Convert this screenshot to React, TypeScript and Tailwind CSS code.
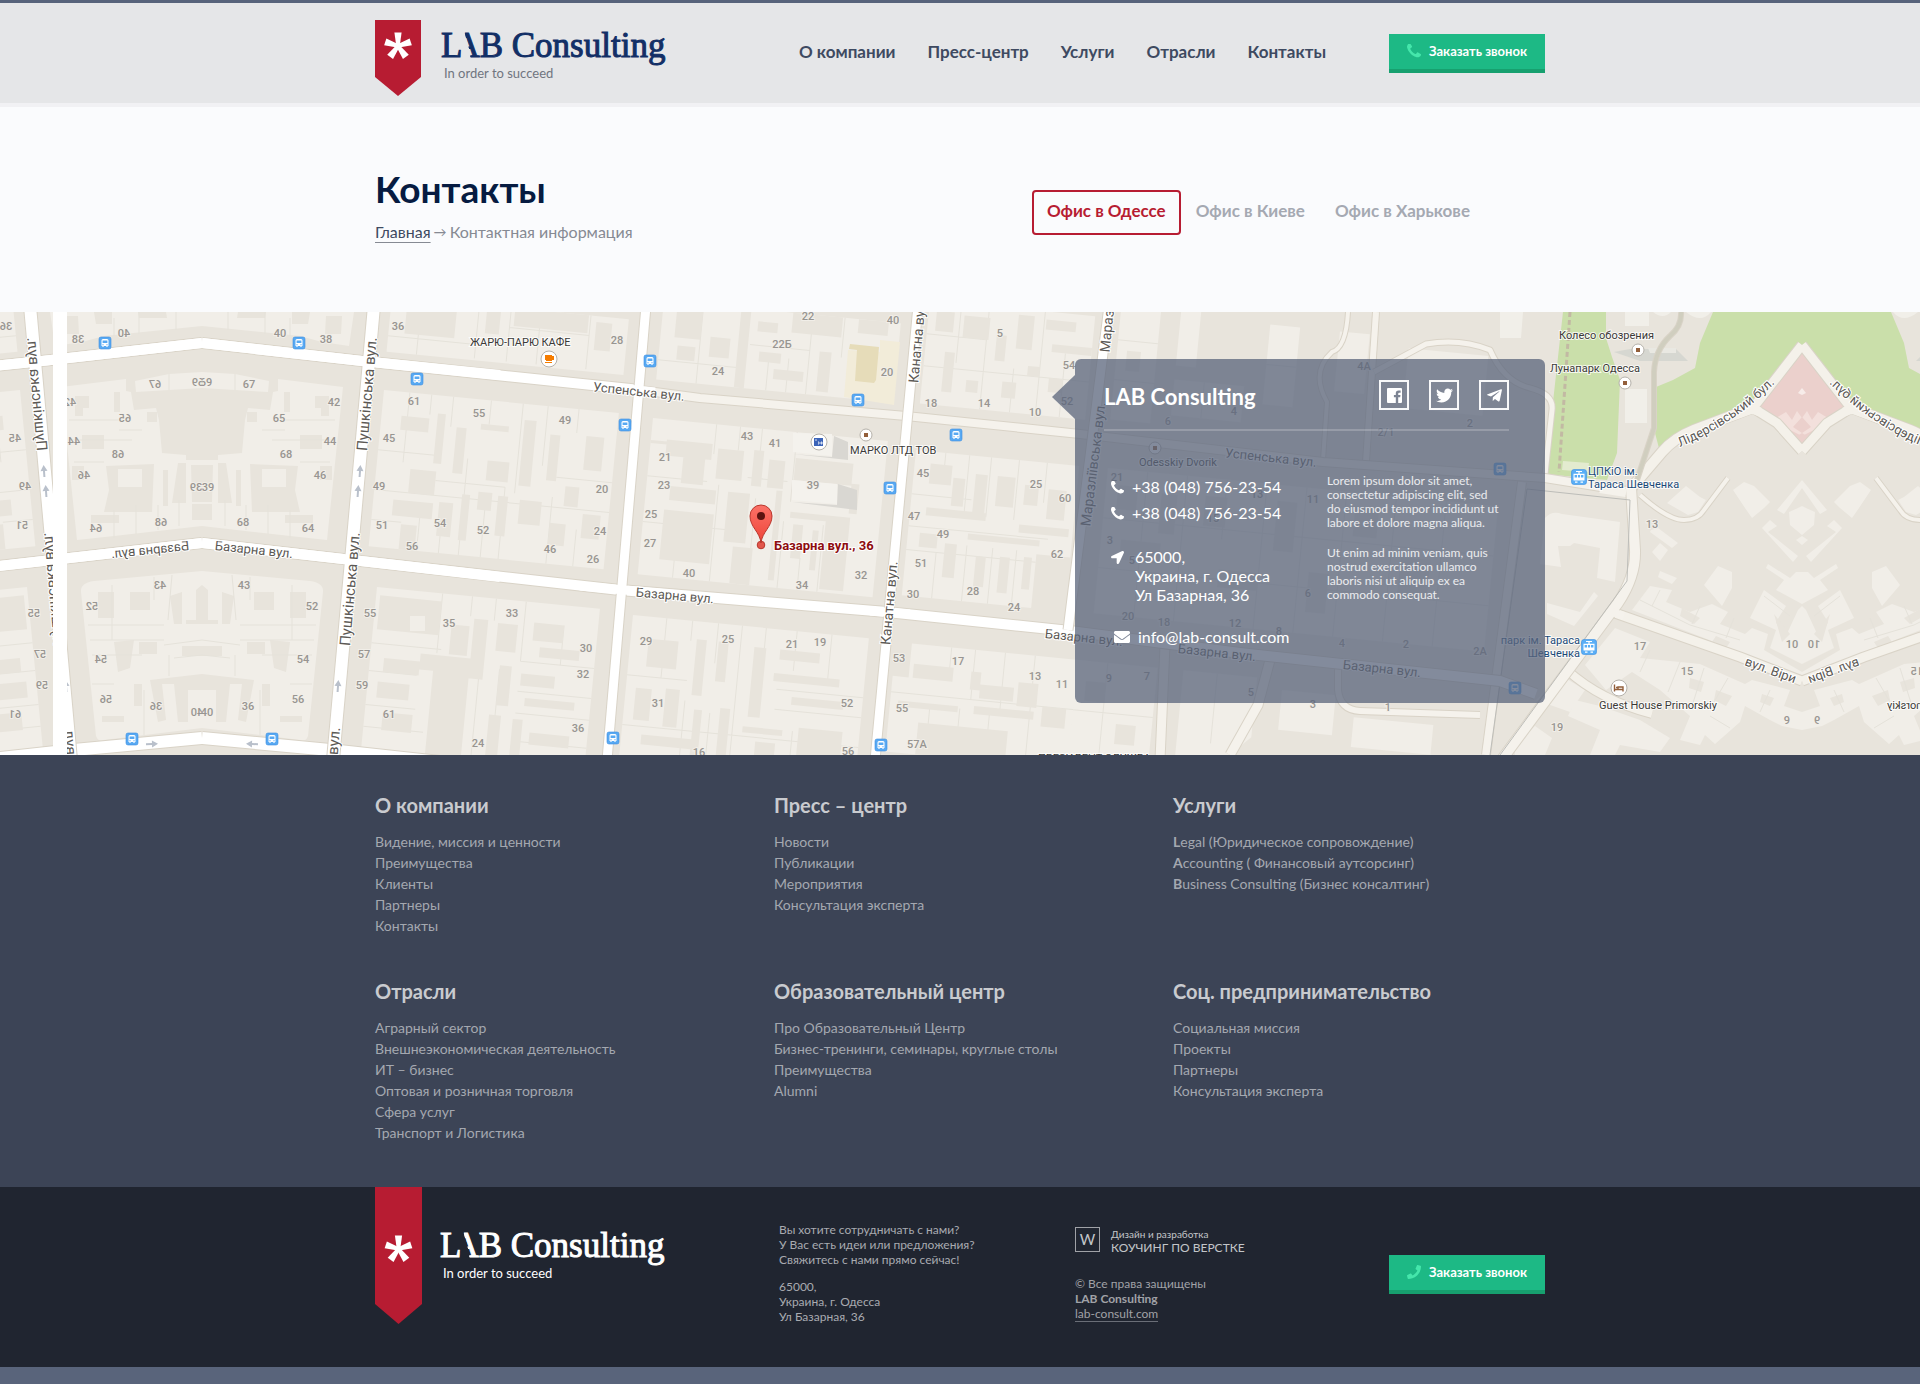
import type { ReactNode } from 'react';
import { FaEnvelope, FaLocationArrow, FaPhone, FaTelegramPlane, FaTwitter } from 'react-icons/fa';

const NAV = ['О компании', 'Пресс-центр', 'Услуги', 'Отрасли', 'Контакты'];
const OFFICES = ['Офис в Одессе', 'Офис в Киеве', 'Офис в Харькове'];

const FOOTER_MENU = [
	{ title: 'О компании', links: ['Видение, миссия и ценности', 'Преимущества', 'Клиенты', 'Партнеры', 'Контакты'] },
	{ title: 'Пресс – центр', links: ['Новости', 'Публикации', 'Мероприятия', 'Консультация эксперта'] },
	{
		title: 'Услуги',
		boldFirst: true,
		links: ['Legal (Юридическое сопровождение)', 'Accounting ( Финансовый аутсорсинг)', 'Business Consulting (Бизнес консалтинг)'],
	},
	{
		title: 'Отрасли',
		links: ['Аграрный сектор', 'Внешнеэкономическая деятельность', 'ИТ – бизнес', 'Оптовая и розничная торговля', 'Сфера услуг', 'Транспорт и Логистика'],
	},
	{ title: 'Образовательный центр', links: ['Про Образовательный Центр', 'Бизнес-тренинги, семинары, круглые столы', 'Преимущества', 'Alumni'] },
	{ title: 'Соц. предпринимательство', links: ['Социальная миссия', 'Проекты', 'Партнеры', 'Консультация эксперта'] },
];

function Star({ x, y }: { x: number; y: number }) {
	return (
		<g transform={`translate(${x} ${y})`} fill="#fff">
			{[0, 72, 144, 216, 288].map((a) => (
				<path key={a} d="M-1.6 1 L-3.6 -13.4 H3.6 L1.6 1 Z" transform={`rotate(${a})`} />
			))}
		</g>
	);
}

function Handset({ size }: { size: number }) {
	return (
		<svg width={size} height={size} viewBox="192 192 1408 1408" fill="currentColor" aria-hidden="true">
			<path d="M1600 1240q0 27-10 70.5t-21 68.5q-21 50-122 106-94 51-186 51-27 0-52.5-3.5t-57-12.5-47-14.5-55.5-20.5-49-18q-98-35-175-83-128-79-264.5-215.5t-215.5-264.5q-48-77-83-175-3-9-18-49t-20.5-55.5-14.5-47-12.5-57-3.5-52.5q0-92 51-186 56-101 106-122 25-11 68.5-21t70.5-10q14 0 21 3 18 6 53 76 11 19 30 54t35 63.5 31 53.5q3 4 17.5 25t21.5 35.5 7 28.5q0 20-28.5 50t-62 55-62 53-28.5 46q0 9 5 22.5t8.5 20.5 14 24 11.5 19q76 137 174 235t235 174q2 1 19 11.5t24 14 20.5 8.5 22.5 5q18 0 46-28.5t53-62 55-62 50-28.5q14 0 28.5 7t35.5 21.5 25 17.5q25 15 53.5 31t63.5 35 54 30q70 35 76 53 3 7 3 21z" />
		</svg>
	);
}

function FacebookIcon() {
	return (
		<svg width="15" height="15" viewBox="0 0 15 15" fill="currentColor" aria-hidden="true">
			<path d="M1 0 H14 Q15 0 15 1 V14 Q15 15 14 15 H11.2 V9.2 H13.2 L13.5 7 H11.2 V5.700 Q11.2 4.700 12.2 4.700 H13.6 V2.600 H11.6 Q8.800 2.600 8.800 5.400 V7 H6.900 V9.200 H8.800 V15 H1 Q0 15 0 14 V1 Q0 0 1 0 Z" />
		</svg>
	);
}

function LogoText({ className, tagline }: { className: string; tagline: string }) {
	return (
		<span className="flex flex-col">
			<span className={`font-['Liberation_Serif',serif] text-[35px] leading-[38px] whitespace-nowrap [-webkit-text-stroke:1px] ${className}`}>
				L<span className="-ml-2 inline-block [clip-path:polygon(34%_0,56%_0,104%_74%,104%_100%,68%_100%,60%_62%)]">A</span>B Consulting
			</span>
			<span className={`pl-[3px] text-[13px] leading-4 ${tagline}`}>In order to succeed</span>
		</span>
	);
}

function CallButton({ icon }: { icon: ReactNode }) {
	return (
		<button type="button" className="flex w-[156px] shrink-0 items-center justify-center gap-2 border-b-4 border-[#17a06f] bg-[#1db985] pt-[8px] pb-[9px] text-[13px] leading-[18px] font-bold whitespace-nowrap text-white">
			<span className="text-[#45e6ab]">{icon}</span>
			Заказать звонок
		</button>
	);
}

/* ---------- map ---------- */

type BlockProps = { x: number; y: number; base: string; yards?: string; lots?: string };

function Block({ x, y, base, yards, lots }: BlockProps) {
	return (
		<g transform={`translate(${x} ${y}) rotate(5.6)`}>
			<path d={base} fill="#f1eee8" />
			{lots && <path d={lots} fill="none" stroke="#e5e2da" />}
			{yards && <path d={yards} fill="#e8e4dc" />}
		</g>
	);
}

function Road({ d, w, color = '#fff' }: { d: string; w: number; color?: string }) {
	return (
		<g fill="none" strokeLinejoin="round">
			<path d={d} stroke="#d9d3c7" strokeWidth={w + 2} />
			<path d={d} stroke={color} strokeWidth={w} />
		</g>
	);
}

function Numbers({ items }: { items: [string, number, number][] }) {
	return (
		<g fontSize="11" fontWeight="500" fill="#989591" textAnchor="middle" stroke="#f1eee8" strokeWidth="2" paintOrder="stroke">
			{items.map(([n, x, y]) => (
				<text key={`${n}-${x}-${y}`} x={x} y={y + 4}>
					{n}
				</text>
			))}
		</g>
	);
}

function Street({ x, y, a, size = 13, children }: { x: number; y: number; a: number; size?: number; children: string }) {
	return (
		<text transform={`translate(${x} ${y}) rotate(${a})`} y="5" textAnchor="middle" fontSize={size} fill="#5c5955" stroke="#fff" strokeWidth="2" paintOrder="stroke">
			{children}
		</text>
	);
}

function Place({ x, y, color = '#3c3a38', anchor = 'start', children }: { x: number; y: number; color?: string; anchor?: 'start' | 'end'; children: string }) {
	return (
		<text x={x} y={y} fontSize="11" fill={color} textAnchor={anchor} stroke="#fff" strokeWidth="2" strokeOpacity=".8" paintOrder="stroke">
			{children}
		</text>
	);
}

function Bus({ x, y }: { x: number; y: number }) {
	return (
		<g transform={`translate(${x} ${y})`}>
			<rect x="-6" y="-6" width="12" height="12" rx="2" fill="#58a9f2" stroke="#3d8fe0" strokeWidth=".6" />
			<path d="M-3.5 3 V-2.5 Q-3.5 -4 -2 -4 H2 Q3.5 -4 3.5 -2.5 V3 H2.6 V4 H1.4 V3 H-1.4 V4 H-2.6 V3 Z" fill="#fff" />
			<path d="M-2.4 -2.6 H2.4 V0 H-2.4 Z M-2.6 1.2 h1.2 v1 h-1.2 Z M1.4 1.2 h1.2 v1 h-1.2 Z" fill="#58a9f2" />
		</g>
	);
}

function Tram({ x, y }: { x: number; y: number }) {
	return (
		<g transform={`translate(${x} ${y})`}>
			<rect x="-7.5" y="-7.5" width="15" height="15" rx="2.5" fill="#5aaef6" stroke="#3d8fe0" strokeWidth=".6" />
			<path d="M-3 -5.5 H3 M0 -5.5 V-3" stroke="#fff" strokeWidth="1.2" />
			<path d="M-5.5 -3.3 H5.5 V3.5 H-5.5 Z M-4 4.4 H-1.5 V5.8 H-4 Z M1.5 4.4 H4 V5.8 H1.5 Z" fill="#fff" />
			<path d="M-4.4 -2 h2.4 v2.4 h-2.4 Z M-1.1 -2 h2.2 v2.4 h-2.2 Z M2 -2 h2.4 v2.4 h-2.4 Z" fill="#5aaef6" />
		</g>
	);
}

function Poi({ x, y, r = 6, children }: { x: number; y: number; r?: number; children?: ReactNode }) {
	return (
		<g transform={`translate(${x} ${y})`}>
			<circle r={r} fill="#fff" stroke="#b5b1aa" />
			{children ?? <rect x="-2" y="-2" width="4" height="4" fill="#935f3b" />}
		</g>
	);
}

function OneWay({ x, y, a = 0 }: { x: number; y: number; a?: number }) {
	return <path d="M-1 6 V0 H-3.5 L0 -6 L3.5 0 H1 V6 Z" transform={`translate(${x} ${y}) rotate(${a})`} fill="#b9c0cb" />;
}

const WEST_NUMBERS: [string, number, number][] = [
	['40', 280, 333], ['38', 326, 339], ['36', 398, 326], ['28', 617, 340], ['67', 249, 384], ['69', 206, 382], ['42', 334, 402], ['65', 279, 418],
	['44', 330, 441], ['68', 286, 454], ['46', 320, 475], ['39', 208, 487], ['68', 243, 522], ['64', 308, 528], ['61', 414, 401], ['55', 479, 413],
	['49', 565, 420], ['45', 389, 438], ['49', 379, 486], ['20', 602, 489], ['51', 382, 525], ['54', 440, 523], ['52', 483, 530], ['24', 600, 531],
	['56', 412, 546], ['46', 550, 549], ['26', 593, 559], ['43', 244, 585], ['52', 312, 606], ['54', 303, 659], ['56', 298, 699], ['36', 248, 706],
	['40', 207, 712], ['55', 370, 613], ['35', 449, 623], ['33', 512, 613], ['57', 364, 654], ['30', 586, 648], ['32', 583, 674], ['59', 362, 685],
	['61', 389, 714], ['36', 578, 728], ['24', 478, 743],
];

/* quarters around Pushkinska street, drawn twice: as is and mirrored */
function WestQuarter({ mirrored = false }: { mirrored?: boolean }) {
	return (
		<g>
			<path d="M202 312 H354 L349 346 L322 342 L300 336 L202 326 Z M202 372 L235 374 L269 381 L268 392 L202 388 Z M278 379 L343 387 L327 540 L290 536 L202 526 V502 H212 L213 465 H202 V460 H218 V455 L242 453 L245 420 L248 408 L270 410 L273 392 L278 391 Z" fill="#f1eee8" />
			<path d="M202 571 L310 581 Q324 583 323 592 L308 736 Q306 742 300 740 L202 728 Z" fill="#f1eee8" />
			<path
				d="M238 312 h28 l-1 6 h-28 Z M292 312 h18 l-2 12 h-16 Z M326 316 h16 l-1 18 h-16 Z M284 392 h6 v20 h-6 Z M315 396 h14 v20 h-8 v-8 h-6 Z M300 435 h22 v14 h-22 Z M247 412 h10 v10 h-10 Z M320 466 h12 v14 h-12 Z M218 463 L226 463 L232 503 H218 Z M236 470 h5 v36 h-5 Z M250 464 L298 466 L295 490 L300 512 H252 Z M285 515 h28 v8 h-28 Z M202 504 h10 v16 h-10 Z"
				fill="#e8e4dc"
			/>
			<path
				d="M202 585 L208 590 V620 H218 V624 H202 Z M222 592 L234 596 L230 624 H222 Z M254 592 h20 v18 h-20 Z M290 592 h16 v26 h-16 Z M247 642 h18 v12 h-18 Z M270 640 L290 642 L286 672 L274 668 Z M202 646 h20 v10 h-20 Z M202 674 L254 680 L246 722 L238 720 L242 684 L230 684 L226 722 H216 V690 H202 Z M262 684 h8 v22 h-8 Z M280 716 h22 v6 h-22 Z"
				fill="#e8e4dc"
			/>
			<rect x="262" y="469" width="24" height="18" fill="#f1eee8" />
			<path
				d="M228 312 V330 M265 312 V334 M290 318 V336 M235 374 V390 M278 420 H335 M272 440 H332 M262 430 H285 M300 462 H330 M225 500 V526 M246 505 V530 M268 505 V534 M290 510 V538 M292 585 V640 M250 577 V600 M232 575 L236 620 M240 625 H316 M240 640 H314 M262 655 H312 M202 640 L240 645 M235 655 V676 M202 655 L230 658 M260 690 V735 M290 684 H312"
				fill="none"
				stroke="#e5e2da"
			/>
			{/* right side of the street */}
			<Block
				x={384}
				y={390}
				base="M0 0 H236 V157 H0 Z"
				lots="M26 0 V70 M48 0 V20 M70 0 V30 M108 0 V24 M140 0 V90 M165 0 V60 M196 0 V24 M0 60 H60 M0 100 H236 M60 85 H130 M180 70 H236 M90 60 V157 M130 85 V157 M48 120 V157 M178 90 V157 M205 120 V157 M0 130 H30 M112 100 V157 M70 110 V157"
				yards="M20 24 h28 v14 h-28 Z M56 18 h8 v50 h-8 Z M76 30 h10 v46 h-10 Z M100 24 h28 v6 h-28 Z M110 60 h22 v20 h-22 Z M143 16 h12 v66 h-12 Z M170 28 h10 v46 h-10 Z M206 26 h18 v34 h-18 Z M34 76 h26 v24 h-26 Z M20 108 h40 v16 h-40 Z M88 96 h8 v46 h-8 Z M104 92 h14 v18 h-14 Z M124 94 h10 v40 h-10 Z M146 96 h22 v24 h-22 Z M190 78 h14 v20 h-14 Z M178 116 h16 v22 h-16 Z M210 104 h18 v24 h-18 Z M66 106 h14 v34 h-14 Z M30 132 h16 v25 h-16 Z"
			/>
			<Block
				x={377}
				y={587}
				base="M0 0 H224 V180 H0 Z"
				lots="M66 0 V60 M96 0 V20 M120 0 V22 M150 0 V60 M0 56 H70 M0 84 H48 M0 118 H50 M0 140 H60 M110 78 V180 M130 70 V180 M150 60 H224 M150 90 H224 M150 112 H224 M150 140 H224 M190 20 V60"
				yards="M4 8 h62 v34 h-62 Z M78 30 h18 v30 h-18 Z M100 22 h14 v60 h-14 Z M124 24 h20 v28 h-20 Z M160 20 h30 v18 h-30 Z M168 44 h40 v10 h-40 Z M50 62 L100 62 V180 H64 V78 H50 Z M14 70 h36 v14 h-36 Z M10 94 h32 v16 h-32 Z M18 124 h30 v18 h-30 Z M130 66 h12 v40 h-12 Z M152 72 h34 v12 h-34 Z M158 96 h50 v8 h-50 Z M124 116 h12 v54 h-12 Z M148 118 h10 v50 h-10 Z M166 130 h40 v12 h-40 Z M168 152 h36 v10 h-36 Z"
			/>
			<rect x="410" y="616" width="15" height="15" fill="#f1eee8" />
			<Block
				x={392}
				y={296}
				base="M0 0 H238 V56 H0 Z"
				lots="M30 0 V56 M88 0 V54 M120 0 V54 M150 0 V54 M200 0 V54 M0 40 H88 M120 20 H200"
				yards="M16 0 H66 V36 H16 Z M96 0 h14 v28 h-14 Z M124 0 h74 v18 h-74 Z M206 6 h16 v28 h-16 Z"
			/>
			<Road d="M202 738 L330 750 L440 762" w={12} />
			<Road d="M202 343 L362 361 L640 390" w={10} />
			<Road d="M202 543 L352 560 L620 590" w={10} />
			<Road d="M374 306 L333 760" w={12} />
			<path d="M202 343 L362 361 L500 375 M202 543 L352 560 L500 577" fill="none" stroke="#fff" strokeWidth="10" />
			<Numbers items={mirrored ? WEST_NUMBERS.filter(([, x]) => x < 400) : WEST_NUMBERS} />
			<Street x={254} y={549} a={6}>Базарна вул.</Street>
			<Street x={367} y={394} a={-85} size={15}>Пушкінська вул.</Street>
			<Street x={350} y={589} a={-85} size={15}>Пушкінська вул.</Street>
			<Street x={334} y={741} a={-85} size={15}>вул.</Street>
			<OneWay x={360} y={471} a={4} />
			<OneWay x={358} y={491} a={4} />
			<OneWay x={338} y={686} a={4} />
			<OneWay x={252} y={744} a={-88} />
			<Bus x={299} y={343} />
			<Bus x={272} y={739} />
		</g>
	);
}

/* seaside part of the park, drawn twice as well */
function EastQuarter({ mirrored = false }: { mirrored?: boolean }) {
	return (
		<g>
			<path d="M1713 312 L1700 343 L1695 368 L1673 380 L1656 387 L1655 433 L1660 452 L1690 430 L1750 408 L1802 408 V312 Z" fill="#cadfaa" />
			<path d="M1625 312 H1649 V326 H1625 Z M1653 312 h18 q-8 8 -18 0 Z M1686 312 h25 q-10 12 -25 0 Z M1625 389 H1647 V423 H1625 Z" fill="#f1efe9" />
			<path d="M1614 352 L1630 349 L1676 349 L1688 361 L1640 361 Z" fill="#cfd1cc" opacity=".7" />
			<path d="M1648 348 H1676 V353 H1650 Z" fill="#e9e8e2" />
			<path
				d="M1667 503 L1686 486 L1700 497 L1706 500 L1698 512 L1688 515 Z M1733 490 L1744 482 L1754 486 L1770 502 L1764 508 L1752 518 L1745 508 Z M1777 510 L1802 480 V488 L1784 514 Z M1789 512 L1798 508 L1802 506 V535 L1790 525 Z M1796 540 L1802 536 V545 Z M1762 528 L1770 520 L1777 526 L1768 532 L1798 556 L1793 562 Z M1768 564 L1790 578 L1796 572 L1802 572 V604 L1776 590 L1784 580 L1766 568 Z M1704 585 L1718 566 L1732 572 L1732 588 L1722 606 Z M1651 530 L1658 528 L1678 543 L1672 548 L1650 532 Z M1652 552 L1660 543 L1668 550 L1660 561 Z M1660 571 L1677 578 L1672 584 L1658 577 Z"
				fill="#f1eee8"
			/>
			<path
				d="M1632 610 L1650 586 L1672 590 L1666 602 L1690 612 L1712 604 L1728 612 L1720 624 L1745 634 L1752 628 L1768 634 L1764 650 L1802 672 L1802 664 L1770 648 L1776 630 L1750 618 L1764 590 L1786 606 L1776 622 L1784 640 L1798 610 L1802 606 V680 L1740 652 Z"
				fill="#f1eee8"
			/>
			<path
				d="M1585 665 L1615 628 L1650 642 L1640 658 L1700 664 L1745 684 L1752 680 L1790 690 L1784 706 L1802 712 V730 L1782 726 L1770 720 L1745 706 L1740 722 L1715 744 L1705 735 L1700 745 L1680 740 L1690 716 L1660 690 L1632 672 L1606 690 Z"
				fill="#f1eee8"
			/>
			<path d="M1682 608 L1700 618 L1694 624 L1680 616 Z M1774 614 L1790 634 L1782 642 Z M1716 636 l14 6 -4 6 -14 -6 Z M1690 678 l14 4 -3 10 -12 -4 Z M1716 690 l16 6 -6 10 -12 -6 Z M1762 694 l12 4 -4 8 -10 -4 Z" fill="#e8e4dc" />
			<path d="M1640 600 L1690 625 L1740 640 M1660 590 L1652 606 M1700 606 L1692 624 M1734 618 L1726 638 M1764 596 L1790 616 M1650 650 L1640 672 M1680 662 L1668 692 M1704 668 L1692 706 M1728 678 L1714 702 M1770 690 L1760 712 M1710 716 L1730 728" fill="none" stroke="#e5e2da" />
			<Road d="M1640 495 Q1668 520 1684 520 Q1698 520 1704 510 L1728 478" w={4} color="#f5f2ec" />
			<Road d="M1627 493 L1662 452 Q1674 438 1694 430 L1752 408" w={10} color="#f4f1ea" />
			<Road d="M1612 612 L1740 657 L1802 681" w={9} color="#f4f1ea" />
			<Road d="M1567 670 Q1600 700 1652 714" w={8} color="#f4f1ea" />
			<path d="M1802 353 L1757 410 L1779 426 L1802 447 Z" fill="#ebd0cc" />
			<path d="M1776 418 L1786 412 L1792 420 L1797 411 L1802 418 V436 L1786 428 Z" fill="#f3e0dc" />
			<path d="M1802 417 L1793 427 L1802 433 Z M1802 433 L1794 438 L1802 445 Z" fill="#ebd0cc" />
			<path d="M1802 388 l-4 5 4 2 Z" fill="#f7ece9" />
			<Road d="M1802 345 L1753 408 L1777 423 L1802 451" w={9} color="#f4f1ea" />
			<path d="M1690 432 L1752 409 L1760 412" fill="none" stroke="#f4f1ea" strokeWidth="9" />
			<Numbers items={mirrored ? [['15', 1687, 671], ['10', 1790, 644], ['9', 1787, 720]] : [['13', 1652, 524], ['17', 1640, 646], ['15', 1687, 671], ['10', 1792, 644], ['9', 1787, 720]]} />
			<path id="liders" d="M1680 447 Q1735 424 1778 380" fill="none" />
			<text fontSize="13" fill="#5c5955" stroke="#fff" strokeWidth="2" paintOrder="stroke">
				<textPath href="#liders">Лідерсівський бул.</textPath>
			</text>
			<text transform="translate(1744 665) rotate(20)" fontSize="13" fill="#5c5955" stroke="#fff" strokeWidth="2" paintOrder="stroke">
				вул. Віри
			</text>
			<Place x={1599} y={709}>Guest House Primorskiy</Place>
		</g>
	);
}

function CityMap() {
	return (
		<svg className="absolute inset-0 h-full w-full font-[Roboto,sans-serif]" viewBox="0 312 1920 443" preserveAspectRatio="xMidYMid slice" role="img" aria-label="Карта: Базарна вул., 36">
			<defs>
				<clipPath id="west">
					<rect x="202" y="312" width="440" height="443" />
				</clipPath>
				<clipPath id="east">
					<rect x="1560" y="312" width="242" height="443" />
				</clipPath>
				<linearGradient id="pin" x1="0" y1="0" x2="0" y2="1">
					<stop offset="0" stopColor="#fb7268" />
					<stop offset="1" stopColor="#ee4438" />
				</linearGradient>
			</defs>
			<rect x="0" y="312" width="1920" height="443" fill="#e8e4dc" />

			<Block
				x={664}
				y={300}
				base="M0 0 H238 V80 H0 Z"
				lots="M40 0 V80 M84 0 V80 M150 0 V80 M182 0 V40 M90 36 H150 M0 60 H84 M110 46 V80 M130 46 V80 M200 30 V80"
				yards="M14 6 h26 v30 h-26 Z M18 44 h18 v14 h-18 Z M50 32 h20 v20 h-20 Z M78 0 h10 v80 h-10 Z M96 12 h20 v10 h-20 Z M100 42 h22 v10 h-22 Z M130 0 h50 v20 h-50 Z M116 58 h30 v10 h-30 Z M160 36 h12 v40 h-12 Z M196 0 h30 v14 h-30 Z"
			/>
			<path d="M880 340 L900 342 L894 405 L844 397 L848 350 L880 352 Z" fill="#f2ecd9" />
			<path d="M850 344 L879 347 L876 380 L874 383 L855 381 L857 350 L849 349 Z" fill="#e6dcb9" />
			<Block
				x={653}
				y={418}
				base="M0 0 H236 V157 H0 Z"
				lots="M64 0 V30 M88 0 V24 M110 0 V24 M145 0 V70 M0 58 H60 M0 104 H100 M35 130 V157 M72 60 V157 M110 70 V157 M140 90 V157 M180 90 V157 M100 50 H140 M160 125 V157"
				yards="M16 20 h46 v16 h-46 Z M34 30 h22 v32 h-22 Z M68 24 h26 v30 h-26 Z M104 22 h10 v36 h-10 Z M120 30 h16 v28 h-16 Z M146 26 h58 v22 h-58 Z M0 22 H30 V25 H0 Z M24 66 h46 v14 h-46 Z M20 90 h50 v50 h-50 Z M82 66 h22 v50 h-22 Z M92 120 h20 v37 h-20 Z M130 60 h6 v90 h-6 Z M146 80 h60 v6 h-60 Z M150 92 h10 v34 h-10 Z M182 84 h24 v70 h-24 Z M170 96 h6 v40 h-6 Z M204 46 h8 v30 h-8 Z"
			/>
			<path d="M793 433 L832 434 V456 L793 452 Z M792 480 L837 484 V504 L792 500 Z" fill="#f4f2ed" />
			<path d="M834 436 L848 442 V460 L793 454 L832 457 Z M838 484 L857 490 V510 L792 502 L837 505 Z" fill="#d9d7d2" />
			<Block
				x={633}
				y={615}
				base="M0 0 H237 V160 H0 Z"
				lots="M34 0 V60 M60 0 V20 M86 0 V40 M110 0 V160 M134 0 V20 M165 0 V40 M200 0 V50 M0 60 H60 M0 110 H237 M60 80 V160 M86 90 V160 M150 60 H237 M150 80 H237 M170 100 V160"
				yards="M18 22 h30 v28 h-30 Z M66 18 h10 v56 h-10 Z M88 18 h10 v40 h-10 Z M124 20 h12 v70 h-12 Z M150 20 h40 v10 h-40 Z M146 44 h66 v8 h-66 Z M166 66 h52 v8 h-52 Z M10 72 h16 v32 h-16 Z M40 70 h14 v38 h-14 Z M70 88 h8 v52 h-8 Z M96 84 h10 v50 h-10 Z M120 100 h40 v6 h-40 Z M134 114 h20 v30 h-20 Z M176 96 h44 v30 h-44 Z M20 118 h50 v10 h-50 Z M94 138 h26 v22 h-26 Z M180 134 h40 v14 h-40 Z"
			/>
			<Block
				x={930}
				y={300}
				base="M0 0 H166 V104 H0 Z"
				lots="M32 0 V60 M60 0 V104 M90 60 V104 M116 0 V104 M140 40 V104 M0 66 H166 M0 34 H60"
				yards="M8 10 h18 v20 h-18 Z M36 12 h26 v22 h-26 Z M70 28 h10 v26 h-10 Z M90 6 h16 v34 h-16 Z M118 8 h30 v10 h-30 Z M126 32 h40 v8 h-40 Z M20 50 h10 v40 h-10 Z M44 76 h12 v12 h-12 Z M80 74 h14 v16 h-14 Z M104 56 h12 v10 h-12 Z M126 66 h14 v14 h-14 Z"
			/>
			<Block
				x={916}
				y={450}
				base="M0 0 H164 V92 H130 V146 H0 Z"
				lots="M30 0 V30 M54 0 V60 M76 0 V60 M104 0 V60 M132 0 V40 M0 44 H60 M0 76 H140 M0 100 H130 M30 100 V146 M60 90 V146 M86 90 V146 M110 90 V146"
				yards="M16 12 h22 v20 h-22 Z M40 24 h12 v28 h-12 Z M62 18 h12 v40 h-12 Z M84 18 h18 v30 h-18 Z M112 24 h14 v20 h-14 Z M136 26 h18 v30 h-18 Z M16 56 h60 v8 h-60 Z M12 82 h18 v14 h-18 Z M60 78 h72 v6 h-72 Z M38 90 h12 v34 h-12 Z M70 100 h10 v30 h-10 Z M94 98 h10 v36 h-10 Z M118 96 h8 v32 h-8 Z M110 64 h50 v8 h-50 Z"
			/>
			<Block
				x={896}
				y={642}
				base="M16 0 H196 V110 H0 V34 H16 Z"
				lots="M56 0 V30 M80 0 V50 M110 0 V60 M140 0 V110 M0 50 H190 M40 60 V110 M70 60 V110 M100 60 V110"
				yards="M20 20 h40 v14 h-40 Z M78 22 h10 v18 h-10 Z M88 34 h34 v14 h-34 Z M126 28 h20 v24 h-20 Z M8 58 h60 v6 h-60 Z M84 56 h60 v8 h-60 Z M30 78 h90 v32 h-90 Z M152 50 h24 v20 h-24 Z"
			/>
			{/* blocks under the contact card */}
			<Block
				x={1122}
				y={300}
				base="M0 0 H40 V120 H0 Z M60 0 H80 V60 H60 Z M60 74 H130 V110 H60 Z M150 10 H180 V90 H150 Z M220 10 H250 V70 H220 Z M290 20 H370 V80 H290 Z"
				lots="M0 40 H40 M0 80 H40 M90 74 V110 M150 50 H180"
				yards="M10 50 h14 v20 h-14 Z"
			/>
			<Block
				x={1108}
				y={468}
				base="M0 0 H392 V146 H0 Z"
				lots="M40 0 V146 M80 0 V146 M120 0 V60 M160 0 V146 M200 0 V146 M240 0 V146 M290 0 V146 M340 0 V146 M0 50 H392 M0 100 H392"
				yards="M12 16 h20 v24 h-20 Z M56 20 h16 v40 h-16 Z M100 18 h22 v30 h-22 Z M172 16 h20 v50 h-20 Z M250 14 h24 v30 h-24 Z M300 60 h30 v40 h-30 Z M20 70 h40 v20 h-40 Z M120 90 h40 v18 h-40 Z M210 84 h20 v40 h-20 Z"
			/>
			<Block x={1078} y={660} base="M0 0 H80 V100 H0 Z M106 0 H180 V60 L150 90 H106 Z M206 10 H260 V50 H206 Z M280 30 H360 V60 H280 Z" lots="M30 0 V100 M0 50 H80 M140 0 V70" yards="M10 20 h20 v20 h-20 Z M44 60 h20 v20 h-20 Z" />

			{/* park side */}
			<path d="M1563 312 H1606 V338 L1612 357 L1620 380 L1617 453 L1607 480 L1545 474 Z" fill="#cadfaa" />
			<path d="M1500 312 H1523 L1521 338 H1500 Z" fill="#f1efe9" />
			<path d="M1563 461 L1589 463 L1588 472 L1562 470 Z" fill="#e3ebcf" />
			<path d="M1570 312 L1559 472" stroke="#c2b9a3" strokeWidth="3" strokeDasharray="5 3" />
			<path d="M1545 518 Q1552 510 1562 514 L1620 522 L1615 582 L1597 578 L1600 548 L1574 543 L1570 546 L1558 546 L1561 567 L1540 564 Z M1547 603 L1580 612 L1594 592 L1598 596 L1574 626 L1547 614 Z M1536 700 L1562 676 L1585 690 L1570 712 Z M1515 745 L1535 726 L1552 738 L1545 755 H1515 Z" fill="#f1eee8" />
			<path d="M1575 700 L1600 706 L1640 720 L1670 738 L1660 752 L1620 745 L1615 755 H1590 L1600 730 L1568 716 Z" fill="#f1eee8" />

			<g clipPath="url(#east)">
				<EastQuarter />
			</g>
			<g transform="translate(3604 0) scale(-1 1)" clipPath="url(#east)">
				<EastQuarter mirrored />
			</g>

			<Road d="M1681 312 Q1682 326 1670 336 Q1655 350 1654 372 V428 L1637 480" w={4} color="#d0cebf" />
			<Road d="M1323 460 L1327 402 Q1310 372 1332 352 Q1346 348 1348 312" w={4} color="#f5f2ec" />
			<Road d="M1366 462 L1376 312" w={6} color="#f5f2ec" />
			<Road d="M1374 372 L1426 344 Q1460 338 1490 350 Q1504 382 1530 388 Q1554 394 1552 410 L1545 474" w={5} color="#f5f2ec" />
			<Road d="M1165 645 L1160 760" w={9} color="#f5f2ec" />
			<Road d="M1270 660 L1258 705 L1230 755" w={9} color="#f5f2ec" />
			<Road d="M1338 668 V690 Q1340 710 1360 711 L1480 715" w={6} color="#f5f2ec" />
			<Road d="M1522 482 L1486 755" w={8} color="#f5f2ec" />
			<Road d="M640 390 L700 398 L906 416 L1080 434 L1323 462 L1545 478 L1632 492" w={8} color="#f5f2ec" />
			<Road d="M1631 488 L1635 550 Q1636 576 1618 603 L1500 762" w={10} color="#f5f2ec" />
			<path d="M1612 612 L1624 616 M1600 489 L1626 493" stroke="#f5f2ec" strokeWidth="8" />
			<path d="M1500 755 L1627 581 L1630 500 L1527 489 L1490 755" fill="none" stroke="#bdbdb9" />
			<Road d="M620 590 L887 612 L1070 631 L1240 653 L1500 681 L1536 694" w={10} />
			<Road d="M1109 306 L1068 630" w={9} />

			<g clipPath="url(#west)">
				<WestQuarter />
			</g>
			<g transform="translate(404 0) scale(-1 1)" clipPath="url(#west)">
				<WestQuarter mirrored />
			</g>
			<rect x="53" y="312" width="14" height="443" fill="#fff" />

			<Road d="M646 306 L607 760" w={9} />
			<Road d="M918 306 L875 760" w={9} />
			<path d="M600 386 L655 392 M580 586 L680 595 M870 611 L910 614" stroke="#fff" strokeWidth="9" />

			<Numbers
				items={[
					['22', 808, 316], ['40', 893, 320], ['22Б', 782, 344], ['24', 718, 371], ['20', 887, 372], ['43', 747, 436], ['41', 775, 443], ['21', 665, 457],
					['23', 664, 485], ['39', 813, 485], ['25', 651, 514], ['27', 650, 543], ['40', 689, 573], ['34', 802, 585], ['32', 861, 575], ['5', 1000, 333],
					['54', 1069, 365], ['52', 1067, 401], ['18', 931, 403], ['14', 984, 403], ['10', 1035, 412], ['45', 923, 473], ['25', 1036, 484], ['60', 1065, 498],
					['47', 914, 516], ['49', 943, 534], ['51', 921, 563], ['62', 1057, 554], ['30', 913, 594], ['28', 973, 591], ['24', 1014, 607], ['29', 646, 641],
					['25', 728, 639], ['21', 792, 644], ['19', 820, 642], ['53', 899, 658], ['17', 958, 661], ['13', 1035, 676], ['11', 1062, 684], ['31', 658, 703],
					['52', 847, 703], ['55', 902, 708], ['16', 699, 752], ['56', 848, 751], ['57А', 917, 744], ['19', 1557, 727], ['4А', 1364, 366], ['6', 1168, 421],
					['4', 1234, 411], ['2', 1470, 423], ['2/1', 1386, 432], ['21', 1117, 477], ['13', 1257, 494], ['11', 1313, 499], ['15', 1213, 518], ['3', 1110, 540],
					['5', 1132, 560], ['6', 1308, 593], ['20', 1128, 616], ['18', 1164, 622], ['12', 1235, 623], ['8', 1279, 631], ['4', 1342, 643], ['2', 1406, 644],
					['2А', 1480, 651], ['9', 1109, 678], ['7', 1147, 676], ['5', 1251, 692], ['3', 1313, 704], ['1', 1388, 707],
				]}
			/>
			<Street x={639} y={391} a={6}>Успенська вул.</Street>
			<Street x={675} y={595} a={5}>Базарна вул.</Street>
			<Street x={1084} y={637} a={6}>Базарна вул.</Street>
			<Street x={1217} y={652} a={6}>Базарна вул.</Street>
			<Street x={1382} y={668} a={6}>Базарна вул.</Street>
			<Street x={1271} y={457} a={6}>Успенська вул.</Street>
			<Street x={917} y={341} a={-85} size={14}>Канатна вул.</Street>
			<Street x={889} y={603} a={-85} size={14}>Канатна вул.</Street>
			<Street x={1111} y={290} a={-84} size={14}>Маразліївська вул.</Street>
			<Street x={1093} y={464} a={-83} size={14}>Маразліївська вул.</Street>

			<Bus x={417} y={379} />
			<Bus x={625} y={425} />
			<Bus x={613} y={738} />
			<Bus x={650} y={361} />
			<Bus x={858} y={400} />
			<Bus x={956} y={435} />
			<Bus x={890} y={488} />
			<Bus x={881} y={745} />
			<Bus x={1500} y={469} />
			<Bus x={1515} y={688} />
			<Tram x={1579} y={477} />
			<Tram x={1589} y={647} />

			<Poi x={549} y={359} r={8}>
				<path d="M-4 -4 H3 V-3 H5 V1 H3 V2 H-3 V1 H-4 Z M-4 3 H3 V4 H-4 Z" fill="#f57c00" />
			</Poi>
			<Poi x={866} y={435} />
			<Poi x={819} y={442} r={8}>
				<rect x="-5" y="-4" width="9" height="8" fill="#3c64b8" />
				<path d="M-4 -2 H-2 M-1 0 H0 V2 H-1 M2 0 H3 V2 H2 Z" stroke="#fff" strokeWidth=".8" fill="none" />
			</Poi>
			<Poi x={1638} y={350} />
			<Poi x={1625} y={383} />
			<Poi x={1155} y={448} />
			<Poi x={1619} y={688} r={8}>
				<path d="M-4.5 -3.5 V3.5 M-4.5 1.5 H4.5 M4 3.5 V-1 H-1 V1 M-3 -0.5 H-1" stroke="#935f3b" strokeWidth="1.4" fill="none" />
			</Poi>
			<Place x={470} y={346}>ЖАРЮ-ПАРЮ КАФЕ</Place>
			<Place x={850} y={454}>МАРКО ЛТД ТОВ</Place>
			<Place x={1559} y={339}>Колесо обозрения</Place>
			<Place x={1550} y={372}>Лунапарк Одесса</Place>
			<Place x={1139} y={466}>Odesskiy Dvorik</Place>
			<Place x={1038} y={762}>ПРЕЗИДЕНТ СЛУЖБА</Place>
			<Place x={1588} y={475} color="#1c4a78">ЦПКіО ім.</Place>
			<Place x={1588} y={488} color="#1c4a78">Тараса Шевченка</Place>
			<Place x={1580} y={644} color="#1c4a78" anchor="end">парк ім. Тараса</Place>
			<Place x={1580} y={657} color="#1c4a78" anchor="end">Шевченка</Place>

			<circle cx="761" cy="545" r="3.8" fill="#e2574c" stroke="#b9372d" />
			<path d="M761 543 C760 532 750 527 750 516 A11 11 0 0 1 772 516 C772 527 762 532 761 543 Z" fill="url(#pin)" stroke="#b9372d" />
			<circle cx="761" cy="516" r="4" fill="#5b1310" />
			<text x="774" y="550" fontSize="13" fontWeight="700" fill="#8e0d10" stroke="#fff" strokeWidth="2" paintOrder="stroke">Базарна вул., 36</text>
		</svg>
	);
}

/* ---------- page ---------- */

function ContactCard() {
	return (
		<div className="relative w-[470px] rounded-md bg-[#59647b]/75 pt-[21px] pr-9 pb-[53px] pl-[29px] text-white">
			<span className="absolute top-4 -left-[23px] h-11 w-[23px] bg-[#59647b]/75 [clip-path:polygon(0_50%,100%_0,100%_100%)]" />
			<div className="flex items-center justify-between border-b-2 border-white/20 pb-[19px]">
				<h2 className="pt-1 text-[22px] leading-[26px] font-bold">LAB Consulting</h2>
				<div className="flex gap-5">
					<a href="#facebook" aria-label="Facebook" className="flex size-[30px] items-center justify-center border-2 border-white/95">
						<FacebookIcon />
					</a>
					<a href="#twitter" aria-label="Twitter" className="flex size-[30px] items-center justify-center border-2 border-white/95">
						<FaTwitter size={17} />
					</a>
					<a href="#telegram" aria-label="Telegram" className="flex size-[30px] items-center justify-center border-2 border-white/95">
						<FaTelegramPlane size={17} />
					</a>
				</div>
			</div>
			<div className="flex justify-between pt-[43px]">
				<address className="pl-[7px] text-[16px] leading-[26px] not-italic">
					<a href="tel:+380487562354" className="flex items-center gap-2">
						<Handset size={13} />
						+38 (048) 756-23-54
					</a>
					<a href="tel:+380487562354" className="flex items-center gap-2">
						<Handset size={13} />
						+38 (048) 756-23-54
					</a>
					<p className="mt-[21px] flex gap-[11px] leading-[19px]">
						<FaLocationArrow size={13} className="mt-1" />
						<span>
							65000,
							<br />
							Украина, г. Одесса
							<br />
							Ул Базарная, 36
						</span>
					</p>
					<a href="mailto:info@lab-consult.com" className="mt-5 flex items-center gap-2 pl-[3px]">
						<FaEnvelope size={16} />
						info@lab-consult.com
					</a>
				</address>
				<div className="w-[182px] text-[12px] leading-[14px] whitespace-nowrap text-white/85">
					<p>
						Lorem ipsum dolor sit amet,
						<br />
						consectetur adipiscing elit, sed
						<br />
						do eiusmod tempor incididunt ut
						<br />
						labore et dolore magna aliqua.
					</p>
					<p className="mt-4">
						Ut enim ad minim veniam, quis
						<br />
						nostrud exercitation ullamco
						<br />
						laboris nisi ut aliquip ex ea
						<br />
						commodo consequat.
					</p>
				</div>
			</div>
		</div>
	);
}

export default function App() {
	return (
		<div className="bg-[#fafbfd] font-[Lato,sans-serif]">
			<header className="border-t-3 border-b-4 border-t-[#57637b] border-b-[#f1f1f4] bg-[#e5e6e8]">
				<div className="mx-auto flex max-w-[1170px] items-start pt-[17px] pb-[7px]">
					<a href="#home" className="flex gap-5">
						<svg width="46" height="76" viewBox="0 0 46 76" aria-hidden="true">
							<path d="M0 0 H46 V57 L23 76 L0 57 Z" fill="#b71c32" />
							<Star x={23} y={26} />
						</svg>
						<span className="pt-[7px]">
							<LogoText className="text-[#122f66]" tagline="text-[#70757f]" />
						</span>
					</a>
					<nav className="mt-5 mr-[63px] ml-auto flex gap-8 text-[17px] leading-6 font-bold text-[#3e4a61]">
						{NAV.map((item) => (
							<a key={item} href="#nav">
								{item}
							</a>
						))}
					</nav>
					<div className="mt-3.5">
						<CallButton icon={<Handset size={14} />} />
					</div>
				</div>
			</header>

			<main>
				<section className="mx-auto flex max-w-[1170px] justify-between pt-[59px] pb-[68px]">
					<div>
						<h1 className="text-[37px] leading-[46px] font-bold text-[#061b41]">Контакты</h1>
						<p className="mt-2 flex text-[16px] leading-6 text-[#868a93]">
							<a href="#home" className="underline underline-offset-4">
								<span className="text-[#3e4a61]">Главная</span>
							</a>
							<span className="mx-[3px] text-[13px]">→</span>
							Контактная информация
						</p>
					</div>
					<div className="mt-6 mr-[60px] flex items-start">
						{OFFICES.map((office, i) => (
							<button
								key={office}
								type="button"
								className={`rounded-sm border-2 px-[13px] pt-1.5 pb-2.5 text-[17px] leading-[25px] font-bold ${i === 0 ? 'border-[#b71c32] text-[#b71c32]' : 'border-transparent text-[#a5a9b2]'}`}
							>
								{office}
							</button>
						))}
					</div>
				</section>

				<section className="relative overflow-hidden pt-[47px] pb-[52px]">
					<CityMap />
					<div className="relative mx-auto flex max-w-[1170px] justify-end">
						<ContactCard />
					</div>
				</section>
			</main>

			<footer>
				<div className="bg-[#3c4456]">
					<div className="mx-auto grid max-w-[1170px] grid-cols-3 gap-x-[27px] gap-y-[43px] pt-[38px] pb-11">
						{FOOTER_MENU.map((group) => (
							<nav key={group.title}>
								<h3 className="text-[20px] leading-6 font-bold text-[#c9cbcf]">{group.title}</h3>
								<ul className="mt-3.5 text-[14px] leading-[21px] text-[#a4a8b0]">
									{group.links.map((link) => (
										<li key={link}>
											<a href="#menu" className={group.boldFirst ? 'inline-block first-letter:font-bold' : ''}>
												{link}
											</a>
										</li>
									))}
								</ul>
							</nav>
						))}
					</div>
				</div>

				<div className="border-b-[17px] border-[#59647b] bg-[#202530]">
					<div className="mx-auto flex max-w-[1170px] items-start pb-[43px]">
						<a href="#home" className="flex w-[404px] gap-[18px]">
							<svg width="47" height="137" viewBox="0 0 47 137" aria-hidden="true">
								<path d="M0 0 H47 V117 L23.5 137 L0 117 Z" fill="#b71c32" />
								<Star x={23.5} y={62} />
							</svg>
							<span className="pt-10">
								<LogoText className="text-white" tagline="text-white" />
							</span>
						</a>
						<div className="w-[296px] pt-[35px] text-[12px] leading-[15px] text-[#a9abb0]">
							<p>
								Вы хотите сотрудничать с нами?
								<br />
								У Вас есть идеи или предложения?
								<br />
								Свяжитесь с нами прямо сейчас!
							</p>
							<p className="mt-3">
								65000,
								<br />
								Украина, г. Одесса
								<br />
								Ул Базарная, 36
							</p>
						</div>
						<div className="pt-10 text-[12px] leading-[15px] text-[#a0a2a7]">
							<div className="flex gap-[11px] text-[#c3c5c9]">
								<span className="flex size-[25px] items-center justify-center border border-[#a0a2a7] text-[15px]">W</span>
								<p className="leading-[13px]">
									<span className="text-[10px]">Дизайн и разработка</span>
									<br />
									КОУЧИНГ ПО ВЕРСТКЕ
								</p>
							</div>
							<p className="mt-[22px]">
								© Все права защищены
								<br />
								<b>LAB Consulting</b>
								<br />
								<a href="#site" className="border-b border-[#6a6e77]">
									lab-consult.com
								</a>
							</p>
						</div>
						<div className="mt-[68px] ml-auto">
							<CallButton icon={<FaPhone size={14} />} />
						</div>
					</div>
				</div>
			</footer>
		</div>
	);
}
